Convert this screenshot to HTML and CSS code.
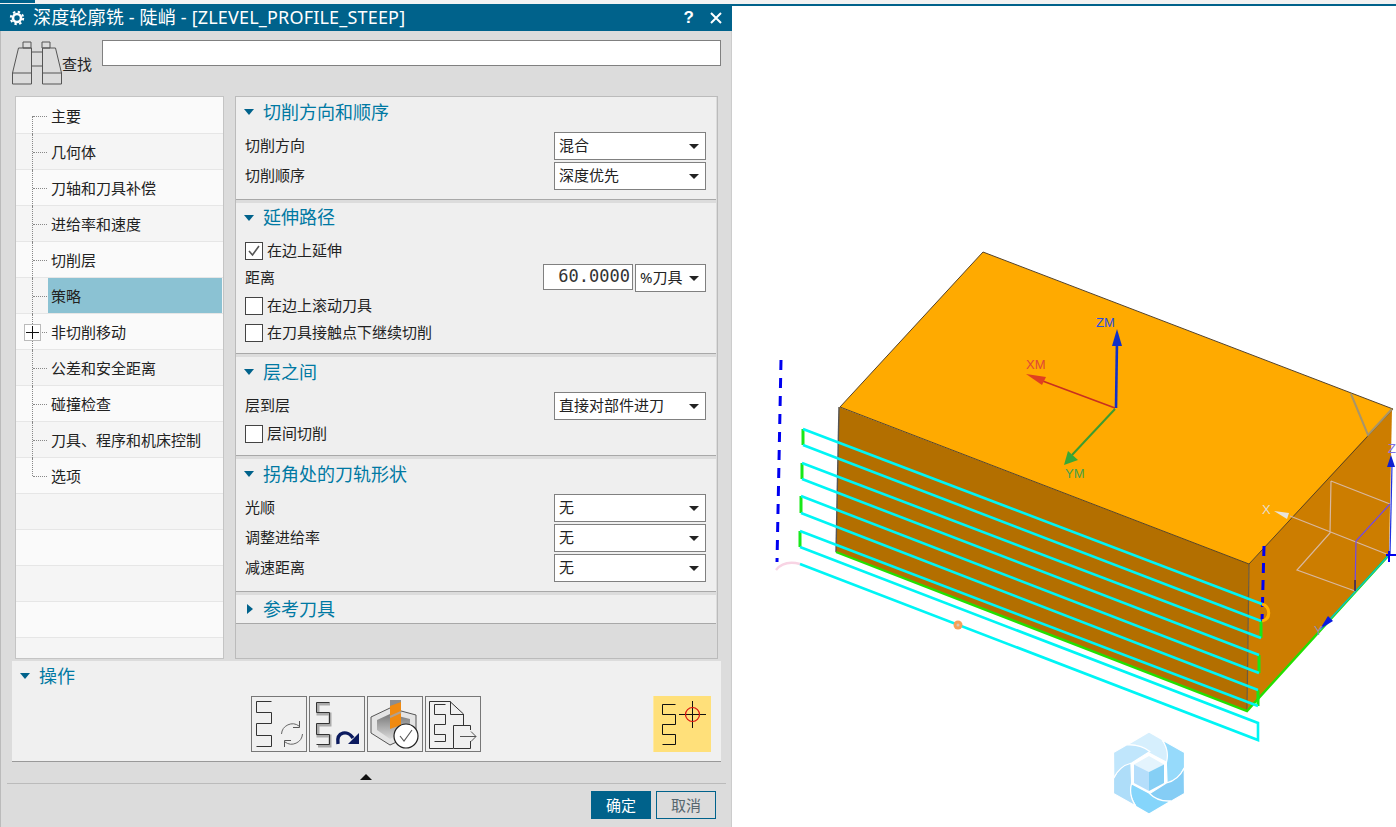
FILE: index.html
```html
<!DOCTYPE html>
<html lang="zh-CN">
<head>
    <meta charset="UTF-8">
    <title>深度轮廓铣 - 陡峭 - [ZLEVEL_PROFILE_STEEP]</title>
    <link rel="stylesheet" href="styles.css">
</head>
<body>
    <div class="topbar"><div class="topbar-tab"></div></div>
    <div class="app">
        <div class="dialog">
            <div class="titlebar">
                <svg class="gear" width="16" height="16" viewBox="0 0 16 16">
                    <circle cx="8" cy="8" r="4" fill="none" stroke="#fff" stroke-width="2.6"/>
                    <circle cx="8" cy="8" r="6.2" fill="none" stroke="#fff" stroke-width="2" stroke-dasharray="2.4 2.47"/>
                </svg>
                <span class="title-text">深度轮廓铣 - 陡峭 - [ZLEVEL_PROFILE_STEEP]</span>
                <span class="title-help">?</span>
                <svg class="title-close" width="12" height="12" viewBox="0 0 12 12">
                    <path d="M1 1 L11 11 M11 1 L1 11" stroke="#fff" stroke-width="2" fill="none"/>
                </svg>
            </div>

            <div class="dialog-body">
                <div class="search">
                    <svg class="binoculars" width="50" height="44" viewBox="0 0 50 44">
                        <g fill="none" stroke="#555" stroke-width="1">
                            <path d="M11 1 H19 V7 H11 Z M30 1 H38 V7 H30 Z"/>
                            <path d="M6.5 7 H19.5 V43 H0.5 V32 Z M30.5 7 H43.5 L49.5 32 V43 H30.5 Z"/>
                            <path d="M0.5 32 H19.5 M30.5 32 H49.5 M19.5 11 H30.5 M19.5 25 H30.5"/>
                        </g>
                    </svg>
                    <label class="search-label">查找</label>
                    <input class="search-input" type="text">
                </div>

                <div class="main">
                    <div class="nav">
                        <div class="nav-item first"><span class="nav-label">主要</span></div>
                        <div class="nav-item"><span class="nav-label">几何体</span></div>
                        <div class="nav-item"><span class="nav-label">刀轴和刀具补偿</span></div>
                        <div class="nav-item"><span class="nav-label">进给率和速度</span></div>
                        <div class="nav-item"><span class="nav-label">切削层</span></div>
                        <div class="nav-item"><span class="nav-label selected">策略</span></div>
                        <div class="nav-item">
                            <svg class="plus" width="17" height="17" viewBox="0 0 17 17">
                                <rect x="0.5" y="0.5" width="16" height="16" fill="#fff" stroke="#bbb"/>
                                <path d="M2 8.5 H15 M8.5 2 V15" stroke="#111" stroke-width="1"/>
                            </svg>
                            <span class="nav-label">非切削移动</span>
                        </div>
                        <div class="nav-item"><span class="nav-label">公差和安全距离</span></div>
                        <div class="nav-item"><span class="nav-label">碰撞检查</span></div>
                        <div class="nav-item"><span class="nav-label">刀具、程序和机床控制</span></div>
                        <div class="nav-item last"><span class="nav-label">选项</span></div>
                        <div class="nav-item empty"></div>
                        <div class="nav-item empty"></div>
                        <div class="nav-item empty"></div>
                        <div class="nav-item empty"></div>
                        <div class="nav-item empty"></div>
                    </div>

                    <div class="panel">
                        <section class="sec">
                            <h2 class="sec-head"><span class="arrow-down"></span>切削方向和顺序</h2>
                            <div class="sec-body">
                                <div class="row"><span>切削方向</span><div class="select"><span>混合</span><i class="caret"></i></div></div>
                                <div class="row"><span>切削顺序</span><div class="select"><span>深度优先</span><i class="caret"></i></div></div>
                            </div>
                        </section>
                        <section class="sec">
                            <h2 class="sec-head sec-head-short"><span class="arrow-down"></span>延伸路径</h2>
                            <div class="sec-body">
                                <div class="check-row"><span class="check"><svg width="16" height="16" viewBox="0 0 16 16"><path d="M3 8 L6.5 12 L13 3" fill="none" stroke="#555" stroke-width="1.6"/></svg></span>在边上延伸</div>
                                <div class="row row-tight">
                                    <span>距离</span>
                                    <div class="dist">
                                        <div class="num">60.0000</div>
                                        <div class="select select-unit"><span>%刀具</span><i class="caret"></i></div>
                                    </div>
                                </div>
                                <div class="check-row"><span class="check"></span>在边上滚动刀具</div>
                                <div class="check-row"><span class="check"></span>在刀具接触点下继续切削</div>
                            </div>
                        </section>
                        <section class="sec">
                            <h2 class="sec-head"><span class="arrow-down"></span>层之间</h2>
                            <div class="sec-body sec-body-layer">
                                <div class="row row-tight"><span>层到层</span><div class="select"><span>直接对部件进刀</span><i class="caret"></i></div></div>
                                <div class="check-row"><span class="check"></span>层间切削</div>
                            </div>
                        </section>
                        <section class="sec">
                            <h2 class="sec-head"><span class="arrow-down"></span>拐角处的刀轨形状</h2>
                            <div class="sec-body">
                                <div class="row"><span>光顺</span><div class="select"><span>无</span><i class="caret"></i></div></div>
                                <div class="row"><span>调整进给率</span><div class="select"><span>无</span><i class="caret"></i></div></div>
                                <div class="row"><span>减速距离</span><div class="select"><span>无</span><i class="caret"></i></div></div>
                            </div>
                        </section>
                        <section class="sec">
                            <h2 class="sec-head sec-head-closed"><span class="arrow-right"></span>参考刀具</h2>
                        </section>
                    </div>
                </div>

                <div class="ops">
                    <h2 class="ops-head"><span class="arrow-down"></span>操作</h2>
                    <div class="ops-row">
                        <div class="tool">
                            <svg width="54" height="54" viewBox="0 0 54 54">
                                <path d="M19.5 4.5 H4.5 V15.5 H19.5 V26.5 H4.5 V38.5 H19.5 V49.5 H4.5" fill="none" stroke="#333" stroke-width="1"/>
                                <path d="M29.5 37 A11 11 0 0 1 47 29 M50.5 37 A11 11 0 0 1 33 45" fill="none" stroke="#666" stroke-width="1"/>
                                <path d="M47.5 24 V30.5 H41 M32.5 50 V43.5 H39" fill="none" stroke="#555" stroke-width="1"/>
                            </svg>
                        </div>
                        <div class="tool">
                            <svg width="54" height="54" viewBox="0 0 54 54">
                                <path d="M20 7 H8 V17 H20 V28 H8 V39 H20 V49 H8" fill="none" stroke="#aaa" stroke-width="3"/>
                                <path d="M19.5 5.5 H6.5 V15.5 H19.5 V26.5 H6.5 V37.5 H19.5 V47.5 H6.5" fill="none" stroke="#333" stroke-width="1"/>
                                <path d="M28 47 C26 34 38 33 43 41" fill="none" stroke="#0b1a5e" stroke-width="3.4"/>
                                <path d="M49 36 L49 47 L38 47 Z" fill="#0b1a5e"/>
                            </svg>
                        </div>
                        <div class="tool">
                            <svg width="54" height="54" viewBox="0 0 54 54">
                                <defs>
                                    <linearGradient id="pocket" x1="0" y1="0" x2="0" y2="1">
                                        <stop offset="0" stop-color="#7a7a7a"/>
                                        <stop offset="1" stop-color="#d8d8d8"/>
                                    </linearGradient>
                                </defs>
                                <path d="M3 20 L22 11 L48 18 V36 L22 48 L3 36 Z" fill="#e4e4e4" stroke="#555" stroke-width="1"/>
                                <path d="M9 23 L22 17 L42 22 V33 L22 42 L9 33 Z" fill="url(#pocket)"/>
                                <path d="M22 3 L33 3 V28 L22 32 Z" fill="#f08a10"/>
                                <path d="M22 3 H33 V5 L22 9 Z" fill="#8d8d8d"/>
                                <path d="M22 20 L33 15" stroke="#b0a090" stroke-width="2"/>
                                <circle cx="38" cy="39" r="12" fill="#fff" stroke="#222" stroke-width="1.2"/>
                                <path d="M32 39 L36 44 L44 33" fill="none" stroke="#555" stroke-width="1.1"/>
                            </svg>
                        </div>
                        <div class="tool">
                            <svg width="54" height="54" viewBox="0 0 54 54">
                                <path d="M27 51.5 H3.5 V4.5 H24 L37.5 17 V28 M24.5 4.5 V17.5 H37.5" fill="none" stroke="#333" stroke-width="1"/>
                                <path d="M19.5 7.5 H8.5 V17.5 H19.5 V27.5 H8.5 V37.5 H19.5 V44.5 H8.5" fill="none" stroke="#333" stroke-width="1"/>
                                <path d="M34 28.5 H27.5 V51.5 H44.5 V44 M44.5 33 V28.5 H34" fill="none" stroke="#333" stroke-width="1"/>
                                <path d="M34 39.5 H50 M45 34.5 L50 39.5 L45 44.5" fill="none" stroke="#555" stroke-width="1"/>
                            </svg>
                        </div>
                        <div class="tool-target">
                            <svg width="55" height="56" viewBox="0 0 55 56">
                                <path d="M19.5 8.5 H6.5 V18.5 H19.5 V28.5 H6.5 V38.5 H19.5 V48.5 H6.5" fill="none" stroke="#111" stroke-width="1"/>
                                <path d="M23 18.5 H50 M36.5 5 V32" stroke="#111" stroke-width="1"/>
                                <circle cx="36.5" cy="18.5" r="7" fill="none" stroke="#d81010" stroke-width="1.2"/>
                            </svg>
                        </div>
                    </div>
                </div>

                <div class="collapse"><span class="arrow-up"></span></div>
                <div class="footer">
                    <button class="btn btn-ok">确定</button>
                    <button class="btn btn-cancel">取消</button>
                </div>
            </div>
        </div>

        <div class="viewport">
            <svg class="scene" width="664" height="821" viewBox="732 6 664 821">
                <defs>
                    <path id="blade" d="M-22 -28 L0 -41 L13 -33.5 Q21 -22 19 -10 L0 -20 Q-8.6 -29 -22 -28 Z" stroke="#fff" stroke-width="1.2"/>
                </defs>

                <!-- part -->
                <polygon points="840,407 983,252 1393,409 1249,564" fill="#ffaa00"/>
                <polygon points="839,407 1249,564 1247,711 836,552" fill="#b36f00"/>
                <polygon points="1249,564 1392,409 1389,555 1247,711" fill="#cc7d00"/>
                <path d="M840 407 L983 252 L1393 409" fill="none" stroke="#54422a" stroke-width="1"/>
                <path d="M840 407 L1249 564 L1393 409" fill="none" stroke="#5a4420" stroke-width="1"/>
                <path d="M839 407 L836 552" fill="none" stroke="#555" stroke-width="1.4"/>
                <path d="M1249 564 L1247 711" fill="none" stroke="#6a5a40" stroke-width="1.2"/>
                <path d="M1351 394 L1368 435 L1392 409" fill="none" stroke="#a8956a" stroke-width="2"/>

                <!-- tool path -->
                <path d="M836 552 L1247 711 L1389 555" fill="none" stroke="#22e000" stroke-width="2.4"/>
                <path d="M1320 630 L1389 555" fill="none" stroke="#10c0c0" stroke-width="1.5"/>
                <path d="M781 360 L777 562" fill="none" stroke="#0000f0" stroke-width="3" stroke-dasharray="10 8"/>
                <path d="M1264 546 L1262 622" fill="none" stroke="#0000f0" stroke-width="3" stroke-dasharray="10 7"/>
                <path d="M776 570 Q784 560 800 564" fill="none" stroke="#f8d4e4" stroke-width="2.5"/>
                <path d="M803 429 V445 M802 463 V479 M801 496 V513 M800 531 V547 M1261 621 V638 M1259 655 V673 M1258 690 V706" fill="none" stroke="#18e818" stroke-width="3"/>
                <path d="M803 429 L1262 604 M803 445 L1261 621 M802 463 L1261 638 M802 479 L1259 655 M801 496 L1259 673 M801 513 L1258 690 M800 531 L1258 706 M800 547 L1258 723 V740 L800 564" fill="none" stroke="#00f5f5" stroke-width="2.6"/>
                <path d="M1262 604 C1271 607 1271 619 1262 621" fill="none" stroke="#ffb000" stroke-width="3"/>
                <circle cx="958" cy="625" r="4.5" fill="#f5a05a"/>
                <circle cx="958" cy="625" r="1.5" fill="#d8c8b8"/>

                <!-- work coordinates -->
                <path d="M1116 408 L1117 340" stroke="#1030c8" stroke-width="2.6"/>
                <polygon points="1117,329 1112,346 1122,346" fill="#1030c8"/>
                <text class="axis" x="1096" y="327" fill="#2850e0">ZM</text>
                <path d="M1115 408 L1040 380" stroke="#c83020" stroke-width="1.6"/>
                <polygon points="1026,374 1046,377 1042,385" fill="#e04020"/>
                <text class="axis" x="1026" y="369" fill="#e04838">XM</text>
                <path d="M1115 409 L1072 455" stroke="#3c9c30" stroke-width="2"/>
                <polygon points="1064,465 1068,451 1078,460" fill="#38a838"/>
                <text class="axis" x="1065" y="478" fill="#48a048">YM</text>

                <!-- machine coordinates -->
                <path d="M1290 516 L1389 555 M1331 481 L1390 504 M1331 481 L1330 533 L1297 570 L1355 591" fill="none" stroke="#d8b8a0" stroke-width="1.2"/>
                <polygon points="1274,511 1289,513 1287,519" fill="#e8e4dc"/>
                <text class="axis" x="1262" y="514" fill="#e8dccc">X</text>
                <path d="M1390 504 L1356 541 L1355 591" fill="none" stroke="#7048e8" stroke-width="1.2"/>
                <path d="M1355 580 L1355 591" stroke="#111" stroke-width="1"/>
                <path d="M1390 555 L1392 465" stroke="#2030e0" stroke-width="1.2"/>
                <polygon points="1391,455 1387,467 1395,467" fill="#1020d0"/>
                <text class="axis" x="1388" y="453" fill="#8070e0">Z</text>
                <path d="M1389 551 V562 M1386 555 H1396" stroke="#0000f0" stroke-width="2"/>
                <polygon points="1320,629 1328,616 1333,621" fill="#0a1ae0"/>
                <text class="axis" x="1314" y="635" fill="#9090b0">Y</text>

                <!-- watermark -->
                <g transform="translate(1149 773)">
                    <use href="#blade" fill="#d6effd"/>
                    <use href="#blade" fill="#96dafb" transform="rotate(60)"/>
                    <use href="#blade" fill="#85cdf5" transform="rotate(120)"/>
                    <use href="#blade" fill="#85d5fb" transform="rotate(180)"/>
                    <use href="#blade" fill="#aeddf9" transform="rotate(240)"/>
                    <use href="#blade" fill="#c0e6fc" transform="rotate(300)"/>
                    <polygon points="0,-17 15,-8.5 0,-1 -15,-8.5" fill="#e4f4fd"/>
                    <polygon points="-15,-8.5 0,-1 0,18 -15,10" fill="#b5defb"/>
                    <polygon points="15,-8.5 0,-1 0,18 15,10" fill="#85cff5"/>
                </g>
            </svg>
        </div>
    </div>
</body>
</html>
```

FILE: styles.css
```css
* {
    box-sizing: border-box;
}
html, body {
    margin: 0;
    height: 827px;
    overflow: hidden;
}
body {
    background: #fff;
    font-family: "Noto Sans", "Noto Sans CJK SC", sans-serif;
    font-size: 15px;
    color: #222;
}
.topbar {
    height: 4px;
    background: #f2f2f2;
}
.topbar-tab {
    width: 35px;
    height: 3px;
    background: #00628b;
}
.app {
    display: flex;
    height: 823px;
}

/* dialog */
.dialog {
    width: 732px;
    flex: none;
    display: flex;
    flex-direction: column;
}
.titlebar {
    height: 27px;
    flex: none;
    display: flex;
    align-items: center;
    padding: 0 10px 0 9px;
    background: #00628b;
    color: #fff;
}
.gear {
    margin-right: 8px;
}
.title-text {
    flex: 1;
    font-size: 18px;
    letter-spacing: 0.18px;
    line-height: 27px;
    white-space: nowrap;
}
.title-help {
    font-family: "Liberation Sans", sans-serif;
    font-size: 17px;
    font-weight: bold;
    margin-right: 16px;
}
.dialog-body {
    flex: 1;
    background: #dcdcdc;
    border-left: 1px solid #bbb;
    border-right: 1px solid #ccc;
    display: flex;
    flex-direction: column;
}
.search {
    height: 65px;
    display: flex;
    padding: 9px 10px 0 11px;
}
.binoculars {
    margin-top: 1px;
}
.search-label {
    margin-top: 13px;
    line-height: 22px;
    width: 40px;
}
.search-input {
    width: 619px;
    height: 26px;
    border: 1px solid #808080;
    background: #fff;
    padding: 0 4px;
}

/* left tree */
.main {
    height: 563px;
    display: flex;
    gap: 11px;
    padding-left: 14px;
}
.nav {
    width: 209px;
    padding-top: 1px;
    background: #fafafa;
    border: 1px solid #c4c4c4;
    overflow: hidden;
}
.nav-item {
    position: relative;
    height: 36px;
    padding: 0 1px 0 32px;
    display: flex;
    border-bottom: 1px solid #e6e6e6;
    background: #fafafa;
}
.nav-item:nth-child(even) {
    background: #f5f5f5;
}
.nav-item::before {
    content: "";
    position: absolute;
    left: 17px;
    top: 18px;
    width: 14px;
    border-top: 1px dotted #888;
}
.nav-item::after {
    content: "";
    position: absolute;
    left: 16px;
    top: 0;
    bottom: -1px;
    border-left: 1px dotted #888;
}
.nav-item.first::after {
    top: 18px;
}
.nav-item.last::after {
    bottom: 17px;
}
.nav-item.empty::before, .nav-item.empty::after {
    display: none;
}
.nav-label {
    flex: 1;
    padding-left: 3px;
    line-height: 36px;
    white-space: nowrap;
}
.nav-label.selected {
    background: #8bc2d3;
}
.plus {
    position: absolute;
    left: 8px;
    top: 10px;
    z-index: 1;
}

/* right panel */
.panel {
    width: 483px;
    border: 1px solid #bbb;
    background: #dcdcdc;
    padding-right: 1px;
    display: flex;
    flex-direction: column;
    gap: 3px;
}
.sec {
    background: #efefef;
    border-bottom: 1px solid #a8a8a8;
}
.sec-head, .ops-head {
    margin: 0;
    height: 30px;
    padding-bottom: 3px;
    display: flex;
    align-items: center;
    font-size: 18px;
    font-weight: normal;
    color: #0079a3;
    white-space: nowrap;
}
.sec-head {
    padding-left: 8px;
}
.sec-head-short {
    height: 29px;
}
.sec-head-closed {
    height: 28px;
}
.arrow-down {
    width: 0;
    height: 0;
    margin: 3px 9px 0 0;
    border-left: 5.5px solid transparent;
    border-right: 5.5px solid transparent;
    border-top: 6px solid #00628b;
}
.arrow-right {
    width: 0;
    height: 0;
    margin: 3px 10px 0 3px;
    border-top: 5.5px solid transparent;
    border-bottom: 5.5px solid transparent;
    border-left: 6px solid #00628b;
}
.sec-body {
    padding: 5px 10px 7px 9px;
}
.sec-body-layer {
    padding-bottom: 8px;
}
.row {
    height: 28px;
    display: flex;
    align-items: center;
    justify-content: space-between;
    margin-bottom: 2px;
}
.row > span, .select > span {
    padding-bottom: 4px;
}
.row-tight {
    margin-bottom: 0;
}
.select {
    width: 152px;
    height: 28px;
    display: flex;
    align-items: center;
    justify-content: space-between;
    padding: 0 6px 0 4px;
    background: #fff;
    border: 1px solid #808080;
}
.select-unit {
    width: 71px;
}
.caret {
    width: 0;
    height: 0;
    border-left: 5px solid transparent;
    border-right: 5px solid transparent;
    border-top: 5px solid #222;
}
.dist {
    display: flex;
    gap: 2px;
    align-items: flex-start;
}
.num {
    width: 90px;
    height: 26px;
    padding-right: 2px;
    background: #fff;
    border: 1px solid #808080;
    text-align: right;
    font-family: "DejaVu Sans Mono", monospace;
    font-size: 17px;
    line-height: 23px;
    color: #333;
}
.check-row {
    height: 27px;
    padding-bottom: 3px;
    display: flex;
    align-items: center;
    gap: 4px;
}
.check {
    width: 18px;
    height: 18px;
    margin-top: 3px;
    background: #fff;
    border: 1px solid #444;
}
.check svg {
    display: block;
}

/* operations */
.ops {
    width: 709px;
    height: 101px;
    margin: 2px 0 0 11px;
    background: #f0f0f0;
    border-bottom: 1px solid #999;
}
.ops-head {
    padding-left: 8px;
}
.ops-row {
    display: flex;
    gap: 2px;
    margin-top: 5px;
    padding: 0 10px 0 239px;
}
.tool {
    width: 56px;
    height: 56px;
    border: 1px solid #777;
}
.tool svg, .tool-target svg {
    display: block;
}
.tool-target {
    width: 58px;
    height: 56px;
    margin-left: auto;
    padding-left: 2px;
    background: #ffe07a;
    border-left: 1px solid #ffe9a0;
}
.collapse {
    height: 22px;
    margin: 0 5px 0 6px;
    border-bottom: 1px solid #bbb;
    display: flex;
    justify-content: center;
    padding-top: 12px;
}
.arrow-up {
    width: 0;
    height: 0;
    margin-right: 2px;
    border-left: 6px solid transparent;
    border-right: 6px solid transparent;
    border-bottom: 6px solid #111;
}
.footer {
    display: flex;
    justify-content: flex-end;
    gap: 5px;
    padding: 7px 15px 0 0;
}
.btn {
    width: 60px;
    height: 28px;
    padding: 0;
    font-family: "Noto Sans CJK SC", sans-serif;
    font-size: 15px;
    line-height: 24px;
}
.btn-ok {
    background: #00628b;
    border: 1px solid #00628b;
    color: #fff;
}
.btn-cancel {
    background: #dcdcdc;
    border: 1px solid #00628b;
    color: #56666e;
}

/* 3d view */
.viewport {
    flex: 1;
    border-top: 2px solid #00628b;
    background: #fff;
}
.scene {
    display: block;
}
.axis {
    font-family: "Liberation Sans", sans-serif;
    font-size: 13px;
}
```
